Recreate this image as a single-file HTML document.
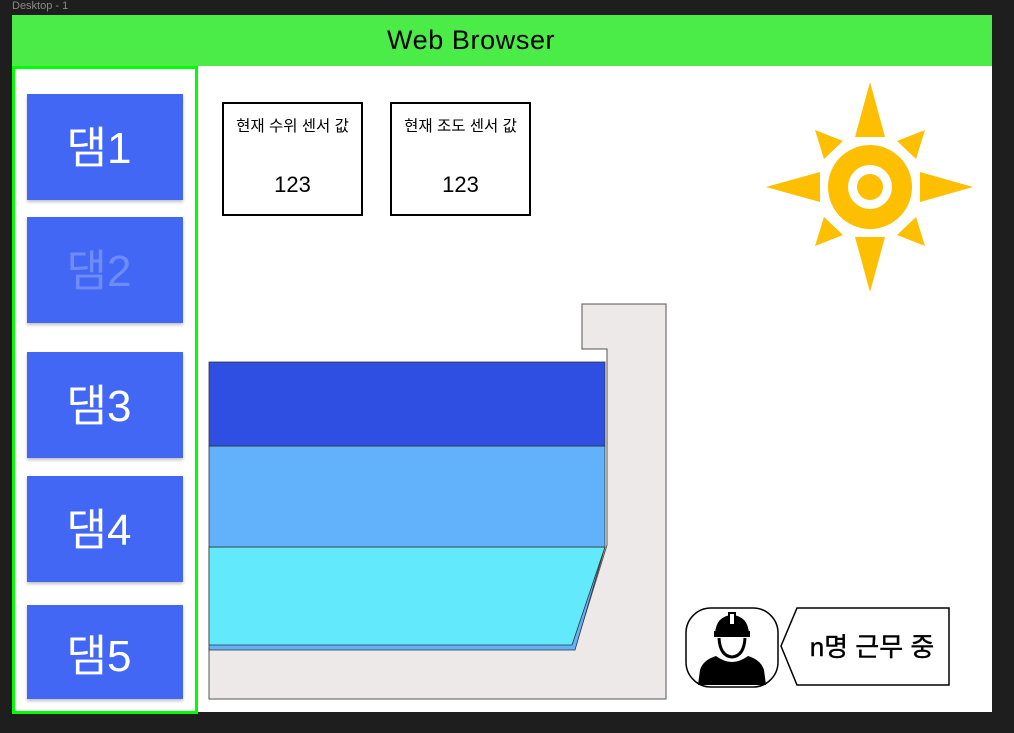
<!DOCTYPE html>
<html><head><meta charset="utf-8"><style>
html,body{margin:0;padding:0;background:#1e1e1e;width:1014px;height:733px;overflow:hidden;font-family:"Liberation Sans","Noto Sans CJK KR",sans-serif}
.t{position:absolute;left:12px;top:0;font-size:11px;color:#8a8a8a}
.frame{position:absolute;left:12px;top:15px;width:980px;height:697px;background:#fff}
.hdr{position:absolute;left:0;top:0;width:980px;height:51px;background:#4beb48;font-size:27px;color:#000}
.hdr span{position:absolute;left:375px;top:10px;letter-spacing:0.6px}
.side{position:absolute;left:0;top:51px;width:180px;height:642px;border:3px solid #0f0}
.btn{position:absolute;left:12px;width:156px;background:#4267f5;color:#fff;font-size:44px;text-align:center;box-shadow:0 2px 3px rgba(0,0,0,.25);padding-right:12px;box-sizing:border-box}
.box{position:absolute;top:87px;width:137px;height:110px;border:2.5px solid #000;text-align:center;font-size:15.5px}
.box .a{margin-top:10px}
.box .b{margin-top:36px;font-size:22px}
svg{position:absolute;left:0;top:0}
</style></head><body>
<div class="t">Desktop - 1</div>
<div class="frame">
<div class="hdr"><span>Web Browser</span></div>
<div class="side">
<div class="btn" style="top:25px;height:106px;line-height:110px">댐1</div>
<div class="btn" style="top:148px;height:106px;line-height:110px;color:#6d8cf8">댐2</div>
<div class="btn" style="top:283px;height:106px;line-height:110px">댐3</div>
<div class="btn" style="top:407px;height:106px;line-height:110px">댐4</div>
<div class="btn" style="top:536px;height:94px;line-height:104px">댐5</div>
</div>
<div class="box" style="left:210px"><div class="a">현재 수위 센서 값</div><div class="b">123</div></div>
<div class="box" style="left:378px"><div class="a">현재 조도 센서 값</div><div class="b">123</div></div>
</div>
<svg width="1014" height="733" viewBox="0 0 1014 733">
<polygon points="582,304 666,304 666,699 209,699 209,648 575,648 607,545 607,349 582,349" fill="#ede9e8" stroke="#555" stroke-width="1"/>
<polygon points="209,547 605,547 575,650 209,650" fill="#62b2fb" stroke="#333" stroke-width="0.8"/>
<polygon points="209,547 605,547 572,645 209,645" fill="#62e9fb" stroke="#333" stroke-width="0.8"/>
<rect x="209" y="446" width="396" height="101" fill="#62b2fb" stroke="#333" stroke-width="0.8"/>
<rect x="209" y="362" width="396" height="84" fill="#2f4fe3" stroke="#333" stroke-width="0.8"/>
<g fill="#fdbf00">
<polygon points="870,82 855,137 885,137"/>
<polygon points="870,292 855,237 885,237"/>
<polygon points="766,187 820,172 820,202"/>
<polygon points="973,187 920,172 920,202"/>
<polygon points="815,130 843,141 824,159"/>
<polygon points="925,130 897,141 916,159"/>
<polygon points="815,246 843,235 824,217"/>
<polygon points="925,246 897,235 916,217"/>
<circle cx="870" cy="187" r="42"/>
</g>
<circle cx="870" cy="187" r="22" fill="#fff"/>
<circle cx="870" cy="187" r="13" fill="#fdbf00"/>
<rect x="686" y="608" width="92" height="79" rx="25" fill="#fff" stroke="#000" stroke-width="1.5"/>
<path d="M715,634 Q716,616 732,615 Q748,616 749,634 Z" fill="#000"/>
<rect x="728" y="612" width="8" height="14" fill="#000"/>
<rect x="730" y="614" width="4" height="10" fill="#fff"/>
<rect x="714" y="631" width="36" height="6" fill="#000"/>
<path d="M719,638 Q720,656 732,657 Q744,656 745,638" fill="none" stroke="#000" stroke-width="3"/>
<path d="M698,685 L700,670 Q703,660 716,656 Q724,662 732,662 Q740,662 748,656 Q761,660 764,670 L766,685 Z" fill="#000"/>
<polygon points="797,608 949,608 949,685 797,685 781,646" fill="#fff" stroke="#000" stroke-width="1.5"/>
<text x="872" y="656" font-size="26" text-anchor="middle" font-family="Liberation Sans,Noto Sans CJK KR,sans-serif" stroke="#000" stroke-width="0.4">n명 근무 중</text>
</svg>
</body></html>
